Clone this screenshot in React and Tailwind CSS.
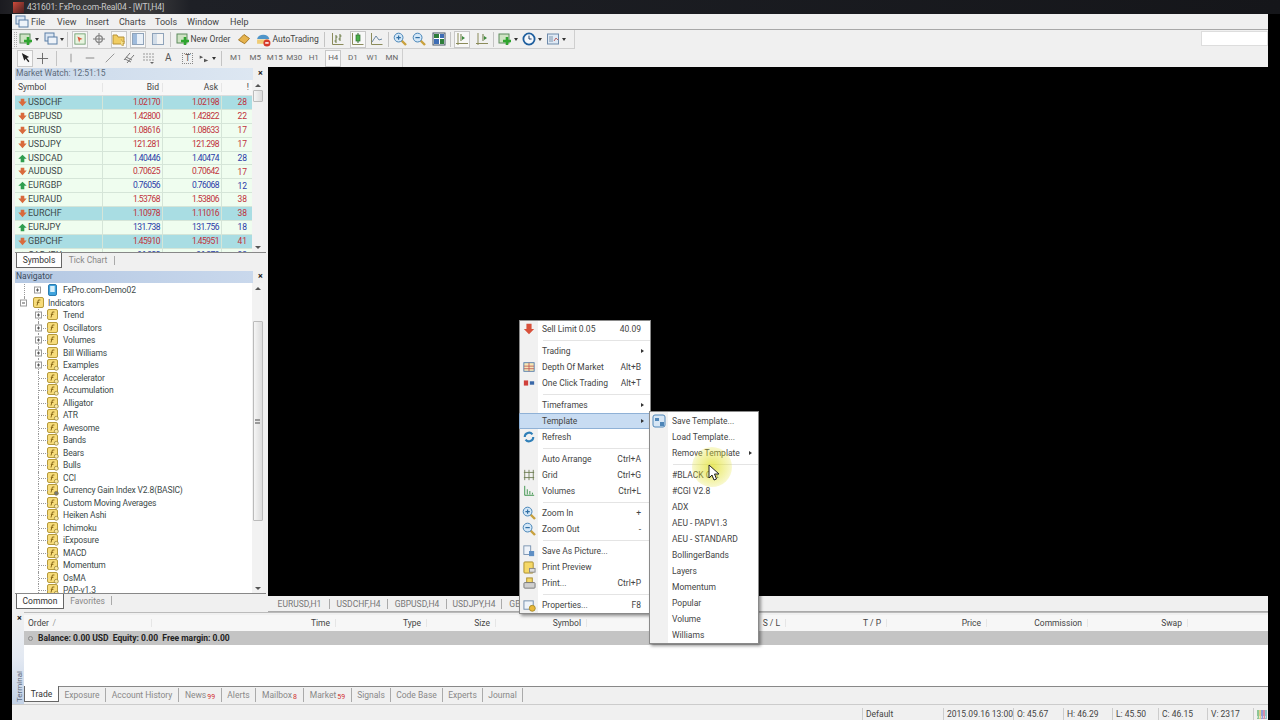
import React from "react";

const FONT = "font-['Roboto',sans-serif]";

const quotes = [
  ["USDCHF", "1.02170", "1.02198", "28", 0, 1],
  ["GBPUSD", "1.42800", "1.42822", "22", 0, 0],
  ["EURUSD", "1.08616", "1.08633", "17", 0, 0],
  ["USDJPY", "121.281", "121.298", "17", 0, 0],
  ["USDCAD", "1.40446", "1.40474", "28", 1, 0],
  ["AUDUSD", "0.70625", "0.70642", "17", 0, 0],
  ["EURGBP", "0.76056", "0.76068", "12", 1, 0],
  ["EURAUD", "1.53768", "1.53806", "38", 0, 0],
  ["EURCHF", "1.10978", "1.11016", "38", 0, 1],
  ["EURJPY", "131.738", "131.756", "18", 1, 0],
  ["GBPCHF", "1.45910", "1.45951", "41", 0, 1],
  ["CADJPY", "96.322", "96.379", "33", 1, 0],
];

const folders = ["Trend", "Oscillators", "Volumes", "Bill Williams", "Examples"];
const indicators = [
  "Accelerator", "Accumulation", "Alligator", "ATR", "Awesome", "Bands", "Bears", "Bulls", "CCI",
  "Currency Gain Index V2.8(BASIC)", "Custom Moving Averages", "Heiken Ashi", "Ichimoku", "iExposure",
  "MACD", "Momentum", "OsMA", "PAP-v1.3",
];

const templates = [
  "#BLACK Cat", "#CGI V2.8", "ADX", "AEU - PAPV1.3", "AEU - STANDARD", "BollingerBands", "Layers",
  "Momentum", "Popular", "Volume", "Williams",
];

function Svg({ children, size = 14, className = "" }) {
  return (
    <svg width={size} height={size} viewBox="0 0 14 14" className={"shrink-0 " + className}>
      {children}
    </svg>
  );
}

function Caret() {
  return <span className="ml-[2px] h-0 w-0 border-x-[2px] border-t-[3px] border-x-transparent border-t-[#333]" />;
}

function Sep({ w = 6 }) {
  return (
    <span className="flex h-full shrink-0 items-center justify-center" style={{ width: w }}>
      <span className="h-[15px] w-px bg-[#c4c4c4]" />
    </span>
  );
}

function Btn({ w = 19.5, active, children }) {
  return (
    <span className="flex h-full shrink-0 items-center justify-center" style={{ width: w }}>
      <span className={"flex h-[17px] w-[16px] items-center justify-center " + (active ? "border border-[#c8c8c8] bg-[#f8f8f8]" : "")}>
        {children}
      </span>
    </span>
  );
}

const NewChart = () => (
  <Svg>
    <rect x="1" y="2" width="10" height="9" fill="#cfe3c4" stroke="#5d8a5d" />
    <path d="M9 5v8M5 9h8" stroke="#2fa52f" strokeWidth="2.6" />
  </Svg>
);
const Profile = () => (
  <Svg>
    <rect x="1" y="1" width="9" height="8" fill="#dce7f3" stroke="#5a7ea6" />
    <rect x="4" y="5" width="9" height="7" fill="#eef3f9" stroke="#5a7ea6" />
  </Svg>
);
const Cross = () => (
  <Svg>
    <path d="M7 1v12M1 7h12" stroke="#777" />
    <circle cx="7" cy="7" r="3.4" fill="none" stroke="#888" strokeWidth="1.4" />
  </Svg>
);
const Folder = () => (
  <Svg>
    <path d="M1 3h4l1 2h6v7H1z" fill="#f1cd62" stroke="#b6923a" />
    <path d="M9 7l1.2 2.4 2.6.3-1.9 1.8.5 2.5-2.4-1.2" fill="#f5e08a" stroke="#b6923a" strokeWidth=".6" />
  </Svg>
);
const Window = ({ blue }) => (
  <Svg>
    <rect x="1.5" y="1.5" width="11" height="11" fill={blue ? "#e9f0f8" : "#f4f4f4"} stroke="#8fa3ba" />
    <rect x="2" y="2" width="4" height="10" fill={blue ? "#9fbbdc" : "#d2dde9"} />
  </Svg>
);
const ZoomIcon = ({ plus }) => (
  <Svg>
    <path d="M8.5 8.5l4.5 4.5" stroke="#c9a13e" strokeWidth="2.4" />
    <circle cx="5.6" cy="5.6" r="4.4" fill="#d3e7f7" stroke="#4a86b8" />
    <path d={plus ? "M3.4 5.6h4.4M5.6 3.4v4.4" : "M3.4 5.6h4.4"} stroke="#2f6ea3" strokeWidth="1.2" />
  </Svg>
);
const GridColor = () => (
  <Svg>
    <rect x="1" y="1" width="12" height="12" fill="#fff" stroke="#456" />
    <rect x="2" y="2" width="5" height="4" fill="#2d7d3a" />
    <rect x="8" y="2" width="4" height="4" fill="#3d6db5" />
    <rect x="2" y="7" width="5" height="5" fill="#3d6db5" />
    <rect x="8" y="7" width="4" height="5" fill="#2d7d3a" />
  </Svg>
);
const Bars = () => (
  <Svg>
    <path d="M1.5 1v11.5h11" fill="none" stroke="#8b8b5a" />
    <path d="M5 3v8M3.5 9H5M5 5h1.5M9 2v7M7.5 7H9M9 4h1.5" stroke="#66763f" fill="none" />
  </Svg>
);
const Candle = () => (
  <Svg>
    <path d="M1.5 1v11.5h11" fill="none" stroke="#8b8b5a" />
    <path d="M7 1v10" stroke="#356b35" />
    <rect x="5" y="3" width="4" height="6" fill="#49b049" stroke="#2f6e2f" strokeWidth=".7" />
  </Svg>
);
const LineChart = () => (
  <Svg>
    <path d="M1.5 1v11.5h11" fill="none" stroke="#8b8b5a" />
    <path d="M2 10l4-6 3 4 3-1" fill="none" stroke="#6d8aa6" />
  </Svg>
);
const Scroll = ({ mid }) => (
  <Svg>
    <path d="M3 1v12M1 11.5h12" stroke="#8b8b5a" fill="none" />
    <path d={mid ? "M8 2v7" : "M6 2v7"} stroke="#66763f" />
    <path d={mid ? "M9 4l3 2-3 2z" : "M7 4l3 2-3 2z"} fill="#3c8a3c" />
  </Svg>
);
const Clock = () => (
  <Svg>
    <circle cx="7" cy="7" r="5.6" fill="#f5f8fc" stroke="#1f5f9e" strokeWidth="1.8" />
    <path d="M7 3.6V7h2.6" fill="none" stroke="#1f3f66" />
  </Svg>
);
const TemplateIcon = () => (
  <Svg>
    <rect x="1.5" y="2" width="11" height="10" fill="#dfe9f4" stroke="#6f8bab" />
    <path d="M3 5h4M3 7h4M3 9h4" stroke="#7f96ae" />
    <path d="M8 9l2-3 2 2" fill="none" stroke="#b86464" />
  </Svg>
);
const Diamond = () => (
  <Svg>
    <path d="M1.5 8L7 2.5l5.5 4-4.8 5.2z" fill="#e6b34d" stroke="#a87a25" />
  </Svg>
);
const AutoTrade = () => (
  <Svg size={15}>
    <path d="M1 6.5A6 5.5 0 0 1 12.5 6.5z" fill="#4f95c9" />
    <path d="M1 7h11v4H1z" fill="#f0cc75" />
    <circle cx="10.2" cy="10.2" r="3.3" fill="#d63a2a" />
    <rect x="8.6" y="9.5" width="3.2" height="1.4" fill="#fff" />
  </Svg>
);
const Arrow = () => (
  <Svg size={13}>
    <path d="M3 1l2.7 8.5 1.5-2.2 2.8 3.7 1.2-1-2.8-3.5 2.5-1z" fill="#222" />
  </Svg>
);

const Fx = ({ gear }) => (
  <svg width="12" height="12" viewBox="0 0 12 12" className="shrink-0">
    <rect x=".5" y=".5" width="10" height="10" rx="1.5" fill="#f7dc7a" stroke="#b59a3c" />
    <path d="M4 8.5L5.4 3H7.4M3.8 5.4h2.6" fill="none" stroke="#8a6a1a" />
    {gear ? <circle cx="9.3" cy="9.3" r="2" fill={gear === 2 ? "#777" : "#fbe9a0"} stroke="#8d7a30" strokeWidth=".7" /> : null}
  </svg>
);

const Expander = ({ minus }) => (
  <span className="relative flex h-[7px] w-[7px] items-center justify-center border border-[#999] bg-white">
    <span className="h-px w-[3px] bg-[#555]" />
    {!minus && <span className="absolute h-[3px] w-px bg-[#555]" />}
  </span>
);

function QuoteArrow({ up }) {
  return up ? (
    <svg width="9" height="9" viewBox="0 0 9 9" className="shrink-0">
      <path d="M4.500 .8L8.700 4.800H6.300V8.200H2.700V4.800H.3z" fill="#2e9e4f" />
    </svg>
  ) : (
    <svg width="9" height="9" viewBox="0 0 9 9" className="shrink-0">
      <path d="M2.700 .8H6.300V3.600H8.700L4.500 8.200.3 3.600H2.700z" fill="#d96a3c" />
    </svg>
  );
}

function Caption({ title, strong }) {
  return (
    <div className="flex h-[13px] shrink-0 items-center">
      <div
        className={
          "flex h-[12px] w-[238px] items-center bg-gradient-to-r pl-px " +
          (strong ? "from-[#b4c8e3] to-[#c9d8ec] text-[#3c4a5c]" : "from-[#c9d8ea] to-[#dde7f2] text-[#5d6a7a]")
        }
      >
        {title}
      </div>
      <span className="ml-[2px] w-[11px] text-center text-[9px] font-bold leading-none text-[#222]">×</span>
    </div>
  );
}

function ScrollBar({ thumbClass, grip }) {
  return (
    <div className="flex w-[11px] shrink-0 flex-col items-center bg-[#f2f2f2]">
      <span className="mt-[4px] h-0 w-0 border-x-[3px] border-b-[3px] border-x-transparent border-b-[#555]" />
      <div className={"flex w-[10px] items-center justify-center rounded-[1px] border border-[#bbb] bg-gradient-to-r from-[#f5f5f5] to-[#dcdcdc] " + thumbClass}>
        {grip && <span className="h-[5px] w-[5px] border-y-2 border-[#999]" />}
      </div>
      <span className="mt-auto mb-[3px] h-0 w-0 border-x-[3px] border-t-[3px] border-x-transparent border-t-[#555]" />
    </div>
  );
}

function PanelTab({ active, children, w }) {
  return (
    <span
      className={
        "flex h-[15px] items-center justify-center " +
        (active ? "border-x border-b border-[#666] bg-white text-[#333]" : "text-[#888]")
      }
      style={{ width: w }}
    >
      {children}
    </span>
  );
}

function MarketWatch() {
  return (
    <div className="flex h-[201px] shrink-0 flex-col">
      <Caption title="Market Watch: 12:51:15" />
      <div className="flex min-h-0 flex-1">
        <div className="w-[237px] overflow-hidden bg-white">
          <div className="flex h-[16px] items-center border-b border-[#ddd] bg-[#f7f7f7] text-[#444]">
            <span className="w-[88px] border-r border-[#e6e6e6] pl-[3px]">Symbol</span>
            <span className="w-[60px] border-r border-[#e6e6e6] pr-[3px] text-right">Bid</span>
            <span className="w-[59px] border-r border-[#e6e6e6] pr-[3px] text-right">Ask</span>
            <span className="w-[27px] text-right">!</span>
          </div>
          {quotes.map((q) => (
            <div
              key={q[0]}
              className={"flex h-[13.900px] items-center border-b border-[#d5e5d8] " + (q[5] ? "bg-[#a9dde3]" : "bg-[#effdef]")}
            >
              <span className="flex w-[88px] items-center gap-[1px] self-stretch border-r border-[#d5e5d8] pl-[3px] text-[9px] text-[#3d4a4a]">
                <QuoteArrow up={q[4]} />
                {q[0]}
              </span>
              {[q[1], q[2]].map((v, i) => (
                <span
                  key={i}
                  className={"self-stretch border-r border-[#d5e5d8] pr-[2px] text-right text-[8.500px] leading-[13px] tracking-[-0.55px] " + (i ? "w-[59px] " : "w-[60px] ") + (q[4] ? "text-[#2a3aa8]" : "text-[#c0303a]")}
                >
                  {v}
                </span>
              ))}
              <span className={"w-[26px] pr-px text-right " + (q[4] ? "text-[#2a3aa8]" : "text-[#c0303a]")}>{q[3]}</span>
            </div>
          ))}
        </div>
        <ScrollBar thumbClass="mt-[3px] h-[12px]" />
      </div>
      <div className="flex h-[16px] shrink-0 border-t border-[#888] bg-[#f0f0f0]">
        <span className="w-px" />
        <PanelTab active w={46}>Symbols</PanelTab>
        <PanelTab w={52}>Tick Chart</PanelTab>
        <span className="mt-[3px] h-[9px] w-px bg-[#aaa]" />
      </div>
    </div>
  );
}

function TreeRow({ depth, label, gear, expander }) {
  if (depth === 0) {
    return (
      <div className="flex h-[12.500px] items-stretch text-[#3d4a4a]">
        <span className="relative w-[18px] shrink-0">
          <span className="absolute top-0 left-[9px] h-1/2 border-l border-dotted border-[#999]" />
          <span className="absolute top-1/2 left-[5px] -translate-y-1/2">
            <Expander minus />
          </span>
        </span>
        <span className="flex items-center gap-[3px]">
          <Fx />
          {label}
        </span>
      </div>
    );
  }
  return (
    <div className="flex h-[12.500px] items-stretch text-[#3d4a4a]">
      <span className="w-[23px] shrink-0" />
      <span className="relative w-[9px] shrink-0 border-l border-dotted border-[#999]">
        <span className="absolute top-[6px] left-0 w-[9px] border-t border-dotted border-[#999]" />
        {expander && (
          <span className="absolute top-1/2 -left-[4px] -translate-y-1/2">
            <Expander />
          </span>
        )}
      </span>
      <span className="flex items-center whitespace-nowrap">
        <Fx gear={gear} />
        <span className="ml-[4px]">{label}</span>
      </span>
    </div>
  );
}

function Navigator() {
  return (
    <div className="mt-[2px] mb-[5px] flex min-h-0 flex-1 flex-col">
      <Caption title="Navigator" strong />
      <div className="flex min-h-0 flex-1 overflow-hidden">
        <div className="w-[237px] overflow-hidden bg-white pt-px tracking-[-0.15px]">
          <div className="flex h-[12.500px] items-stretch text-[#3d4a4a]">
            <span className="relative w-[23px] shrink-0">
              <span className="absolute top-0 left-[9px] h-full border-l border-dotted border-[#999]" />
            </span>
            <span className="relative flex items-center pl-[10px]">
              <span className="absolute top-1/2 -left-[4px] -translate-y-1/2">
                <Expander />
              </span>
              <svg width="9" height="12" viewBox="0 0 9 12" className="mr-[6px] shrink-0">
                <rect x=".5" y=".5" width="8" height="11" rx="1.5" fill="#3fa3dc" stroke="#2a7bb0" />
                <rect x="2.200" y="2" width="4.500" height="6" fill="#d8effa" />
              </svg>
              FxPro.com-Demo02
            </span>
          </div>
          <TreeRow depth={0} label="Indicators" />
          {folders.map((f, i) => (
            <TreeRow key={f} depth={1} label={f} expander gear={i === 4 ? 1 : 0} />
          ))}
          {indicators.map((n) => (
            <TreeRow key={n} depth={1} label={n} gear={n.startsWith("Currency") ? 2 : 1} />
          ))}
        </div>
        <ScrollBar thumbClass="mt-[31px] h-[200px]" grip />
      </div>
      <div className="flex h-[14px] shrink-0 border-t border-[#888] bg-[#f0f0f0]">
        <span className="w-px" />
        <PanelTab active w={48}>Common</PanelTab>
        <PanelTab w={47}>Favorites</PanelTab>
        <span className="mt-[2px] h-[9px] w-px bg-[#aaa]" />
      </div>
    </div>
  );
}

function Toolbars() {
  return (
    <>
      <div className="flex h-[20px] border-t border-[#a8a8a8] text-[#444]">
        <div className="flex h-full w-[563px] items-center border-r border-b border-[#cfcfcf]">
          <span className="ml-[2px] h-[15px] w-[3px] border-x border-dotted border-[#aaa]" />
          <span className="w-px" />
          <Btn w={22}><NewChart /><Caret /></Btn>
          <span className="w-[3px]" />
          <Btn w={22}><Profile /><Caret /></Btn>
          <Sep w={5} />
          <Btn active><Svg size={12}><rect x="1" y="1" width="12" height="12" fill="#e8f4e0" stroke="#6c9c6c" /><path d="M4 4l6 3-3 1-1 3z" fill="#d9583c" /></Svg></Btn>
          <Btn><Cross /></Btn>
          <Btn active><Folder /></Btn>
          <Btn active><Window blue /></Btn>
          <Btn><Window /></Btn>
          <Sep />
          <span className="flex w-[61px] shrink-0 items-center gap-[1px] pl-[2px]"><NewChart /><span>New Order</span></span>
          <Btn w={19}><Diamond /></Btn>
          <span className="flex w-[66px] shrink-0 items-center gap-[2px] pl-[2px]"><AutoTrade /><span>AutoTrading</span></span>
          <Sep w={9} />
          <Btn><Bars /></Btn>
          <Btn active><Candle /></Btn>
          <Btn><LineChart /></Btn>
          <Sep w={3} />
          <Btn><ZoomIcon plus /></Btn>
          <Btn><ZoomIcon /></Btn>
          <Btn><GridColor /></Btn>
          <Sep w={4} />
          <Btn active><Scroll /></Btn>
          <Btn><Scroll mid /></Btn>
          <Sep w={4} />
          <Btn w={24}><NewChart /><Caret /></Btn>
          <Btn w={24}><Clock /><Caret /></Btn>
          <Btn w={24}><TemplateIcon /><Caret /></Btn>
        </div>
        <div className="ml-auto mt-[1px] h-[15px] w-[67px] border border-[#ddd] bg-white" />
      </div>
      <div className="flex h-[18px] items-center text-[8px] text-[#666]">
        <div className="flex h-full w-[391px] items-center border-r border-[#cfcfcf]">
          <span className="w-[5px]" />
          <Btn w={16} active><Arrow /></Btn>
          <Btn w={19}><Svg size={13}><path d="M7 1v12M1 7h12" stroke="#666" /></Svg></Btn>
          <Sep w={9} />
          <Btn><Svg size={12}><path d="M7 2v10" stroke="#888" /></Svg></Btn>
          <Btn><Svg size={12}><path d="M2 7h10" stroke="#777" /></Svg></Btn>
          <Btn><Svg size={12}><path d="M2 12L12 2" stroke="#888" /></Svg></Btn>
          <Btn><Svg><path d="M2 9l6-7M5 12l7-8M4 6l6 3M3 8l6 3" stroke="#777" /></Svg></Btn>
          <Btn><Svg><path d="M1 3h12M1 6h12M1 9h12" stroke="#999" strokeDasharray="2 1" /><path d="M8 11h4l-2 2z" fill="#666" /></Svg></Btn>
          <Btn><span className="text-[10px] leading-none text-[#555]">A</span></Btn>
          <Btn><span className="border border-dotted border-[#888] px-[2px] text-[9px] leading-none text-[#555]">T</span></Btn>
          <Btn><Svg size={12}><path d="M2 4l4 2-4 2zM7 8l5 2-5 2z" fill="#555" /></Svg><Caret /></Btn>
          <Sep w={9} />
          {["M1", "M5", "M15", "M30", "H1", "H4", "D1", "W1", "MN"].map((t) => (
            <Btn key={t} active={t === "H4"}>{t}</Btn>
          ))}
        </div>
      </div>
    </>
  );
}

const termCols = [
  ["Time", 184],
  ["Type", 91],
  ["Size", 69],
  ["Symbol", 91],
  ["", 85],
  ["", 84],
  ["S / L", 30],
  ["T / P", 101],
  ["Price", 100],
  ["Commission", 101],
  ["Swap", 100],
];

const termTabs = [
  ["Exposure", 0, 47],
  ["Account History", 0, 73],
  ["News", "99", 43],
  ["Alerts", 0, 34],
  ["Mailbox", "8", 48],
  ["Market", "59", 48],
  ["Signals", 0, 39],
  ["Code Base", 0, 52],
  ["Experts", 0, 40],
  ["Journal", 0, 40],
];

function Terminal() {
  return (
    <div className="flex h-[92px] text-[#444]">
      <div className="flex w-[12px] shrink-0 flex-col items-center justify-between bg-gradient-to-b from-[#f0f0f0] via-[#e3e9f2] to-[#c3d2e6] pt-px pl-[3px]">
        <span className="text-[9px] font-bold leading-[10px] text-[#222]">×</span>
        <span className="mb-[2px] [writing-mode:vertical-rl] rotate-180 text-[8px] leading-[9px] text-[#5d6a7a]">Terminal</span>
      </div>
      <div className="flex min-w-0 flex-1 flex-col">
        <div className="flex h-[19px] items-end border-t border-[#bbb] bg-[#f0f0f0]">
          <div className="flex h-[16px] w-full items-center bg-[#f7f7f7]">
            <span className="flex w-[128px] shrink-0 items-center justify-between border-r border-[#e6e6e6] pl-[4px] pr-[95px]">
              Order <span className="text-[#999]">/</span>
            </span>
            {termCols.map(([t, w], i) => (
              <span key={i} className="shrink-0 whitespace-nowrap border-r border-[#e6e6e6] pr-[5px] text-right" style={{ width: w }}>
                {t}
              </span>
            ))}
          </div>
        </div>
        <div className="flex h-[14px] items-center gap-[3px] bg-[#c4c4c4] pl-[4px] font-bold text-[#222]">
          <span className="h-[5px] w-[5px] rounded-full border border-[#888]" />
          <span className="ml-[2px] whitespace-pre">Balance: 0.00 USD  Equity: 0.00  Free margin: 0.00</span>
        </div>
        <div className="flex-1 border-b border-[#888] bg-white" />
        <div className="flex h-[17px] items-start bg-[#f0f0f0]">
          <span className="-mt-px flex h-[16px] w-[35px] items-center justify-center border-x border-b border-[#666] bg-white pt-px text-[#333]">Trade</span>
          {termTabs.map(([t, n, w]) => (
            <span key={t} className="mt-px flex h-[14px] shrink-0 items-center justify-center border-r border-[#aaa] text-[#888]" style={{ width: w }}>
              {t}
              {n ? <span className="mt-[5px] ml-px text-[7px] leading-none text-[#d03030]">{n}</span> : null}
            </span>
          ))}
        </div>
      </div>
    </div>
  );
}

const statusCells = [
  ["Default", 81],
  ["2015.09.16 13:00", 70],
  ["O: 45.67", 50],
  ["H: 46.29", 49],
  ["L: 45.50", 46],
  ["C: 46.15", 49],
  ["V: 2317", 46],
];

function StatusBar() {
  return (
    <div className="flex h-[16px] items-end justify-end border-t border-[#ccc] bg-[#f0f0f0] pt-[3px] text-[#444]">
      {statusCells.map(([t, w]) => (
        <span key={t} className="flex h-full shrink-0 items-center border-l border-[#ccc] pl-[3px]" style={{ width: w }}>
          {t}
        </span>
      ))}
      <span className="flex h-full w-[15px] shrink-0 items-center justify-end border-l border-[#ccc]">
        <svg width="11" height="11" viewBox="0 0 11 11">
          <path d="M1 1v9" stroke="#2a9a3a" />
          <path d="M3 1v9" stroke="#c8b020" />
          <path d="M5 1v9" stroke="#3050c0" />
          <path d="M7 1v9" stroke="#c03060" />
          <path d="M9 1v9" stroke="#30a0a0" />
          <path d="M0 8h11" stroke="#fff" strokeDasharray="1 1" />
        </svg>
      </span>
    </div>
  );
}

function MenuRow({ icon, label, right, arrow, hi }) {
  return (
    <div className={"relative flex h-[16px] items-center " + (hi ? "-mx-px rounded-[1px] border border-[#8fb1d6] bg-[#c8dcf2]" : "")}>
      <span className="flex w-[18px] shrink-0 items-center justify-center">{icon}</span>
      <span className="ml-[4px] flex-1">{label}</span>
      {right && <span className="mr-[9px]">{right}</span>}
      {arrow && <span className="mr-[6px] h-0 w-0 border-y-[2px] border-l-[3px] border-y-transparent border-l-[#333]" />}
    </div>
  );
}

function MenuSep() {
  return <div className="ml-[23px] my-[2.500px] h-px bg-[#e4e4e4]" />;
}

function ChartMenu() {
  return (
    <div className="absolute top-[320px] left-[519px] w-[132px] border border-[#8a8a8a] bg-[linear-gradient(to_right,#f1f1f1_18px,#ffffff_18px)] shadow-[2px_2px_3px_rgba(0,0,0,.4)] text-[#444]">
      <MenuRow icon={<Svg size={12}><path d="M7 13L1 7h3V1h6v6h3z" fill="#d8503a" /></Svg>} label="Sell Limit 0.05" right="40.09" />
      <MenuSep />
      <MenuRow label="Trading" arrow />
      <MenuRow icon={<Svg size={12}><rect x="1" y="2" width="12" height="10" fill="#f6e7b5" stroke="#4a76a8" /><path d="M1 6h12M1 9h12M7 2v10" stroke="#c05a5a" /></Svg>} label="Depth Of Market" right="Alt+B" />
      <MenuRow icon={<Svg size={12}><rect x="1" y="4" width="5" height="6" fill="#d0403a" /><rect x="8" y="5" width="5" height="4" fill="#3a68a8" /></Svg>} label="One Click Trading" right="Alt+T" />
      <MenuSep />
      <MenuRow label="Timeframes" arrow />
      <MenuRow label="Template" arrow hi />
      <MenuRow icon={<Svg size={12}><path d="M2 7a5 5 0 0 1 9-3M12 7a5 5 0 0 1-9 3" fill="none" stroke="#2f7fb8" strokeWidth="2.400" /></Svg>} label="Refresh" />
      <MenuSep />
      <MenuRow label="Auto Arrange" right="Ctrl+A" />
      <MenuRow icon={<Svg size={12}><path d="M2 1v12M12 1v12M1 4h12M1 10h12M7 1v12" stroke="#6b7a50" /></Svg>} label="Grid" right="Ctrl+G" />
      <MenuRow icon={<Svg size={12}><path d="M2 1v11h11" fill="none" stroke="#2a8a3a" /><path d="M5 5v6M8 7v4M11 9v2" stroke="#2a8a3a" /></Svg>} label="Volumes" right="Ctrl+L" />
      <MenuSep />
      <MenuRow icon={<ZoomIcon plus />} label="Zoom In" right="+" />
      <MenuRow icon={<ZoomIcon />} label="Zoom Out" right="-" />
      <MenuSep />
      <MenuRow icon={<Svg size={12}><rect x="1" y="1" width="8" height="10" fill="#eef3f9" stroke="#6f8bab" /><rect x="7" y="7" width="6" height="6" fill="#5f8fc4" /></Svg>} label="Save As Picture..." />
      <MenuRow icon={<Svg size={13}><rect x="1" y="1" width="10" height="12" rx="1" fill="#f5d867" stroke="#a88a2a" /><rect x="7" y="8" width="6" height="4" fill="#ddd" stroke="#888" /></Svg>} label="Print Preview" />
      <MenuRow icon={<Svg size={13}><rect x="4" y="1" width="6" height="5" fill="#f5d867" stroke="#a88a2a" /><rect x="1" y="6" width="12" height="6" rx="1" fill="#cfcfcf" stroke="#777" /></Svg>} label="Print..." right="Ctrl+P" />
      <MenuSep />
      <MenuRow icon={<Svg size={13}><rect x="1" y="2" width="10" height="9" fill="#eef3f9" stroke="#6f8bab" /><circle cx="10" cy="10" r="3.200" fill="#e9b93c" stroke="#a88a2a" /></Svg>} label="Properties..." right="F8" />
    </div>
  );
}

function TemplateMenu() {
  return (
    <div className="absolute top-[411px] left-[649px] w-[110px] border border-[#8a8a8a] bg-[linear-gradient(to_right,#f1f1f1_18px,#ffffff_18px)] pt-px shadow-[2px_2px_3px_rgba(0,0,0,.4)] text-[#444]">
      <MenuRow icon={<Svg><rect x="1" y="1" width="12" height="12" rx="2" fill="#d6e6f5" stroke="#4f86b8" /><path d="M3 4h4v3H3zM8 8h4v4H8z" fill="#4f86b8" /></Svg>} label="Save Template..." />
      <MenuRow label="Load Template..." />
      <MenuRow label="Remove Template" arrow />
      <MenuSep />
      {templates.map((t) => (
        <MenuRow key={t} label={t} />
      ))}
    </div>
  );
}

export default function App() {
  return (
    <div className={"relative flex h-[720px] w-[1280px] flex-col overflow-hidden bg-black text-[8.500px] leading-none " + FONT}>
      <div className="flex h-[14px] shrink-0 items-center bg-[linear-gradient(to_right,#1b1b20,#3a3a3c_60px,#3a3a3c_150px,#1e2026_190px,#15161a)]">
        <span className="ml-[13px] h-[11px] w-[11px] bg-gradient-to-br from-[#d04a3a] to-[#4a2020]" />
        <span className="ml-[3px] text-[8.500px] tracking-[-0.1px] text-[#c9c9c9]">431601: FxPro.com-Real04 - [WTI,H4]</span>
      </div>

      <div className="mx-[12px] flex min-h-0 flex-1 flex-col bg-[#f0f0f0]">
        <div className="flex h-[15px] shrink-0 items-center pt-px text-[9px] text-[#444]">
          <span className="ml-[3px] mr-[2px]"><Profile /></span>
          <span className="w-[26px]">File</span>
          <span className="w-[29px]">View</span>
          <span className="w-[33px]">Insert</span>
          <span className="w-[36px]">Charts</span>
          <span className="w-[32px]">Tools</span>
          <span className="w-[43px]">Window</span>
          <span>Help</span>
        </div>
        <Toolbars />

        <div className="flex h-[545px] shrink-0">
          <div className="flex w-[254px] shrink-0 flex-col pl-[3px]">
            <MarketWatch />
            <Navigator />
          </div>
          <div className="ml-[2px] flex min-w-0 flex-1 flex-col">
            <div className="flex-1 bg-black" />
            <div className="flex h-[16px] shrink-0 items-center border-b border-[#aaa] bg-[#f0f0f0] pt-px pl-[2px] text-[#777]">
              {[["EURUSD,H1", 60], ["USDCHF,H4", 58], ["GBPUSD,H4", 59], ["USDJPY,H4", 55], ["GBPCHF,H4", 60]].map(([t, w]) => (
                <span key={t} className="flex h-[10px] shrink-0 items-center justify-center border-r border-[#aaa]" style={{ width: w }}>
                  {t}
                </span>
              ))}
            </div>
          </div>
        </div>
        <Terminal />
        <StatusBar />
      </div>

      <ChartMenu />
      <TemplateMenu />
      <div className="absolute top-[447px] left-[692px] h-[40px] w-[40px] rounded-full bg-[radial-gradient(circle,rgba(225,225,40,.75)_0%,rgba(225,225,40,.35)_55%,rgba(225,225,40,0)_100%)]" />
      <svg width="12" height="17" viewBox="0 0 12 17" className="absolute top-[464px] left-[708px]">
        <path d="M1 1v13l3-3 2 5 2.500-1-2-5h4.500z" fill="#fff" stroke="#222" />
      </svg>
    </div>
  );
}
